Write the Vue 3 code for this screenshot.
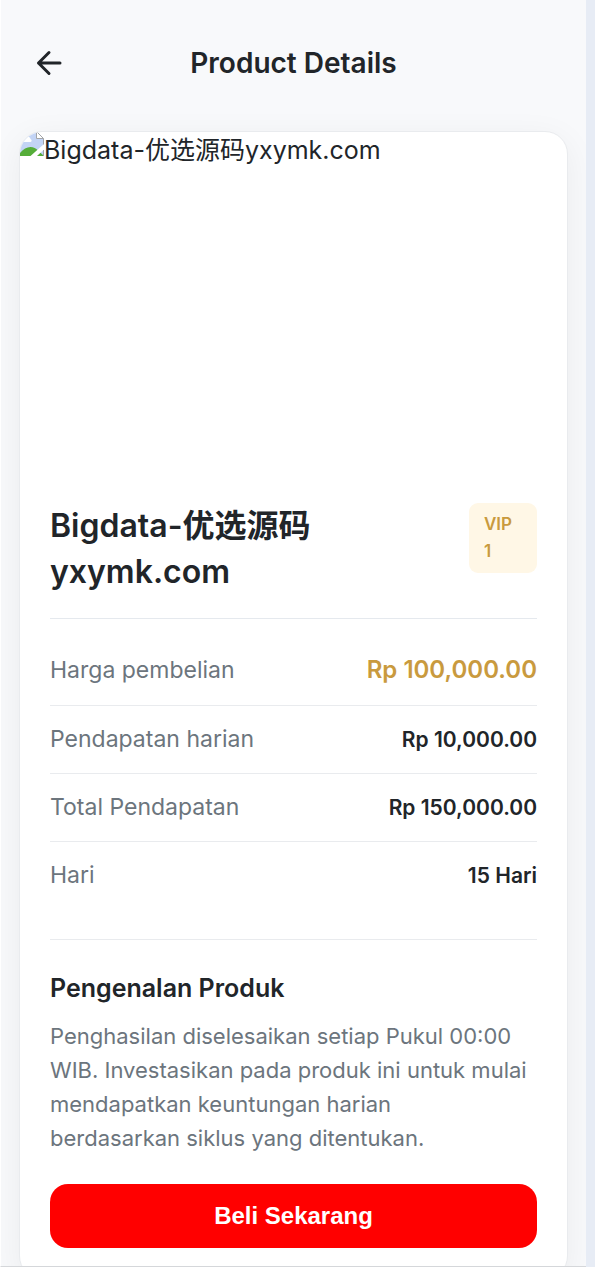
<script setup>
const details = [
  { label: 'Harga pembelian', value: 'Rp 100,000.00', price: true },
  { label: 'Pendapatan harian', value: 'Rp 10,000.00' },
  { label: 'Total Pendapatan', value: 'Rp 150,000.00' },
  { label: 'Hari', value: '15 Hari' },
]
</script>

<template>
  <div class="frame">
    <div class="page">
      <header class="topbar">
        <button class="back" type="button" aria-label="Back">
          <svg viewBox="0 0 28 28" width="28" height="28" aria-hidden="true">
            <path d="M25 14H3.500M14 3.500L3.500 14L14 24.500" />
          </svg>
        </button>
        <h1>Product Details</h1>
      </header>

      <main class="card">
        <div class="photo">
          <svg class="broken" viewBox="0 0 24 24" width="24" height="24" aria-hidden="true">
            <path d="M0 0H16.500V6.500H23.500V24H0Z" fill="#c3d4f5" />
            <path d="M2 10C2 8 4 8 4.500 7C5.500 4 10 4 10.500 7C12 7.500 12 10 10.500 10Z" fill="#fff" />
            <path d="M0 24V21C3 17 7 15 10.500 15C13.500 15 16 16.500 18 18.500L24 24Z" fill="#55ad39" />
            <path d="M10.500 24L24 12V17.500L17 24Z" fill="#fff" />
            <path d="M16.500 0.500V6.500H23.500L17.500 0.500ZM23.500 6.500V12.500M23.500 18V24" fill="#fff" stroke="#a3a5a8" />
          </svg>
          <span>Bigdata-优选源码yxymk.com</span>
        </div>

        <div class="body">
          <div class="heading">
            <h2>Bigdata-优选源码<wbr />yxymk.com</h2>
            <span class="badge">VIP 1</span>
          </div>

          <dl class="details">
            <div v-for="item in details" :key="item.label" class="row">
              <dt>{{ item.label }}</dt>
              <dd :class="{ price: item.price }">{{ item.value }}</dd>
            </div>
          </dl>

          <section class="intro">
            <h3>Pengenalan Produk</h3>
            <p>
              Penghasilan diselesaikan setiap Pukul 00:00 WIB. Investasikan pada produk ini untuk mulai
              mendapatkan keuntungan harian<br />berdasarkan siklus yang ditentukan.
            </p>
          </section>

          <button class="buy" type="button">Beli Sekarang</button>
        </div>
      </main>
    </div>
  </div>
</template>

<style>
body {
  margin: 0;
  background: #e7ecf5;
}
</style>

<style scoped>
.frame {
  box-sizing: border-box;
  height: 100vh;
  padding-right: 9px;
  overflow: hidden;
  color: #212529;
  font-family: Inter, "Noto Sans CJK SC", sans-serif;
}
.page {
  box-sizing: border-box;
  height: 100%;
  padding: 0 18px;
  overflow: hidden;
  background: #f8f9fb;
  border-left: 1px solid #fff;
  border-bottom: 1px solid #d5d7da;
}
h1, h2, h3, p, dl, dd {
  margin: 0;
}
.topbar {
  display: grid;
  grid-template-columns: 60px 1fr 60px;
  align-items: center;
  height: 131px;
  box-sizing: border-box;
  padding-bottom: 6px;
}
.back {
  justify-self: start;
  display: flex;
  margin-left: 16px;
  padding: 0;
  border: 0;
  background: none;
  cursor: pointer;
}
.back path {
  fill: none;
  stroke: #212529;
  stroke-width: 3;
  stroke-linecap: round;
  stroke-linejoin: round;
}
h1 {
  text-align: center;
  font-size: 28px;
  line-height: 40px;
  font-weight: 600;
}
.card {
  overflow: hidden;
  background: #fff;
  border: 1px solid #e9ebee;
  border-radius: 23px;
  box-shadow: 0 8px 34px rgba(0, 0, 0, 0.06);
}
.photo {
  display: flex;
  align-items: flex-start;
  height: 341px;
  font-size: 25px;
  line-height: 36px;
  white-space: nowrap;
}
.broken {
  flex: none;
}
.body {
  padding: 30px;
}
.heading {
  display: flex;
  justify-content: space-between;
  align-items: flex-start;
  padding-bottom: 23px;
  border-bottom: 1px solid #e5e9ee;
}
h2 {
  flex: 1;
  max-width: 300px;
  font-size: 32px;
  line-height: 46px;
  font-weight: 600;
}
.badge {
  box-sizing: border-box;
  width: 68px;
  padding: 8px 15px;
  border-radius: 9px;
  background: #fff7e6;
  color: #c99a3e;
  font-size: 17px;
  line-height: 27px;
  font-weight: 600;
  overflow-wrap: normal;
}
.details {
  padding: 16px 0 30px;
  border-bottom: 1px solid #e9ebee;
}
.row {
  display: flex;
  justify-content: space-between;
  align-items: center;
  padding: 17px 0;
  border-bottom: 1px solid #e9ebee;
  font-size: 21px;
  line-height: 33px;
}
.row:last-child {
  border-bottom: 0;
}
dt {
  color: #6c757d;
  font-size: 23px;
}
dd {
  font-weight: 600;
}
.price {
  color: #c99a3e;
  font-size: 24px;
  line-height: 36px;
}
.intro {
  padding-top: 30px;
}
h3 {
  font-size: 25px;
  line-height: 36px;
  font-weight: 600;
}
p {
  margin-top: 13px;
  color: #6c757d;
  font-size: 22px;
  line-height: 34px;
}
.buy {
  display: block;
  width: 100%;
  height: 64px;
  margin-top: 29px;
  border: 0;
  border-radius: 18px;
  background: #f00;
  color: #fff;
  font: bold 24px "Liberation Sans", sans-serif;
  cursor: pointer;
}
</style>
